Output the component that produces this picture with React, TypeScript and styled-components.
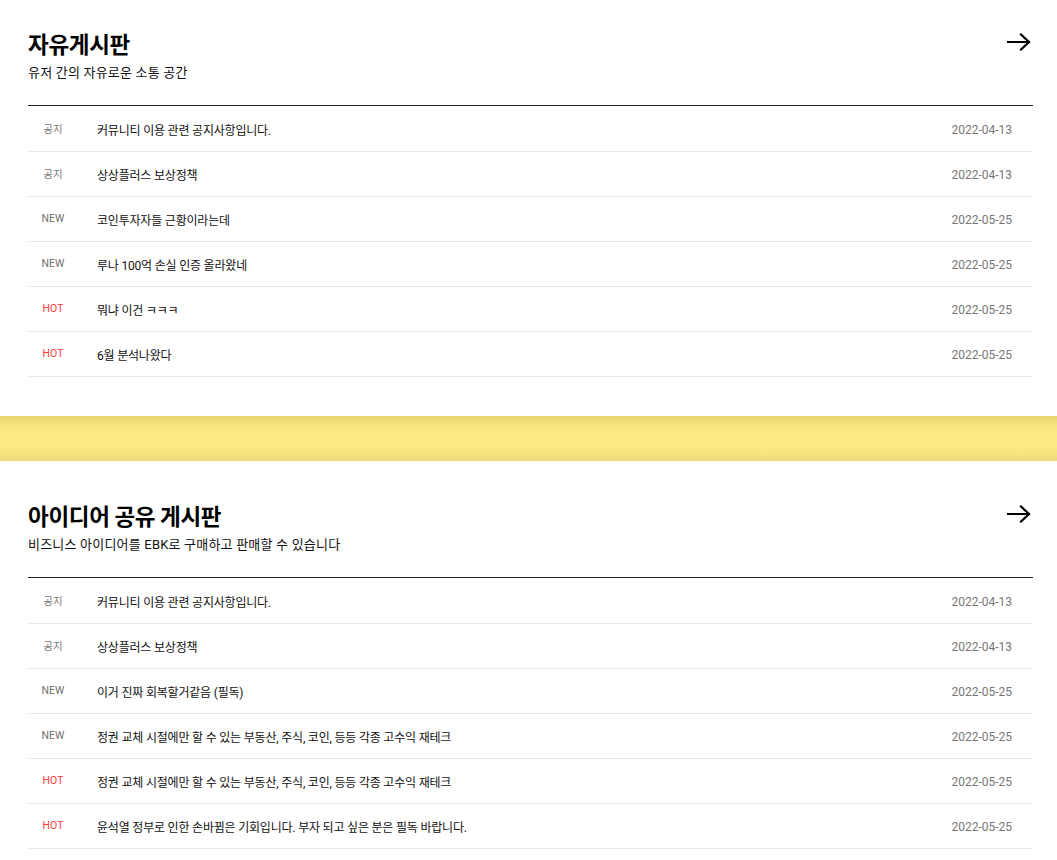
import * as React from "react";
import styled, { createGlobalStyle } from "styled-components";

type Badge = "notice" | "new" | "hot";

interface Post {
  badge: Badge;
  title: string;
  date: string;
}

interface BoardData {
  name: string;
  description: string;
  posts: Post[];
}

const GlobalStyle = createGlobalStyle`
  html, body {
    margin: 0;
    padding: 0;
    background: #fff;
  }
  body {
    font-family: Roboto, "Noto Sans CJK KR", sans-serif;
    color: #111;
  }
`;

const Page = styled.div`
  display: flex;
  flex-direction: column;
`;

const Board = styled.section<{ $top: number }>`
  padding: ${p => p.$top}px 24px 39px 28px;
`;

const Header = styled.header`
  display: flex;
  align-items: flex-start;
  justify-content: space-between;
  padding-bottom: 22px;
  border-bottom: 1px solid #222;
`;

const HeaderText = styled.div`
  display: flex;
  flex-direction: column;
  gap: 5px;
`;

const BoardName = styled.h2`
  margin: 0;
  font-family: "Noto Sans CJK KR", sans-serif;
  font-size: 22.5px;
  line-height: 30px;
  font-weight: 700;
  letter-spacing: -0.3px;
  color: #000;
`;

const BoardDescription = styled.p`
  margin: 0;
  font-family: Roboto, "Noto Sans CJK KR", sans-serif;
  font-size: 13px;
  line-height: 20px;
  letter-spacing: 0.2px;
  color: #111;
`;

const MoreLink = styled.a`
  display: flex;
  margin-top: 5px;
  margin-right: 2px;
  color: #000;
  cursor: pointer;
`;

const PostList = styled.ul`
  margin: 0;
  padding: 0;
  list-style: none;
`;

const PostRow = styled.li`
  display: grid;
  grid-template-columns: 50px 1fr auto;
  column-gap: 19px;
  align-items: center;
  height: 44px;
  padding-right: 21px;
  border-bottom: 1px solid #e8e8e8;

  &:first-child {
    padding-top: 1px;
  }
`;

const badgeColors: Record<Badge, string> = {
  notice: "#777",
  new: "#707070",
  hot: "#ff3a3a"
};

const BadgeCell = styled.span<{ $kind: Badge }>`
  text-align: center;
  font-size: 10.5px;
  color: ${p => badgeColors[p.$kind]};
  margin-top: -1px;
`;

const PostTitle = styled.span`
  font-size: 12px;
  letter-spacing: -0.2px;
  color: #111;
  white-space: nowrap;
  overflow: hidden;
  text-overflow: ellipsis;
  margin-top: 1px;
`;

const PostDate = styled.span`
  font-size: 12px;
  color: #777;
  margin-top: 1px;
`;

const Band = styled.div`
  height: 45px;
  background: linear-gradient(
    to bottom,
    #ebd472 0%,
    #f8e47f 22%,
    #fee985 45%,
    #fde884 70%,
    #f5e27f 85%,
    #ead679 100%
  );
`;

const badgeText: Record<Badge, string> = {
  notice: "공지",
  new: "NEW",
  hot: "HOT"
};

const ArrowIcon = () => (
  <svg width="24" height="18" viewBox="0 0 24 18" fill="none">
    <path
      d="M1 9H22M14 1.5L22 9L14 16.5"
      stroke="#000"
      strokeWidth="2.2"
      strokeLinecap="square"
    />
  </svg>
);

const boards: BoardData[] = [
  {
    name: "자유게시판",
    description: "유저 간의 자유로운 소통 공간",
    posts: [
      { badge: "notice", title: "커뮤니티 이용 관련 공지사항입니다.", date: "2022-04-13" },
      { badge: "notice", title: "상상플러스 보상정책", date: "2022-04-13" },
      { badge: "new", title: "코인투자자들 근황이라는데", date: "2022-05-25" },
      { badge: "new", title: "루나 100억 손실 인증 올라왔네", date: "2022-05-25" },
      { badge: "hot", title: "뭐냐 이건 ㅋㅋㅋ", date: "2022-05-25" },
      { badge: "hot", title: "6월 분석나왔다", date: "2022-05-25" }
    ]
  },
  {
    name: "아이디어 공유 게시판",
    description: "비즈니스 아이디어를 EBK로 구매하고 판매할 수 있습니다",
    posts: [
      { badge: "notice", title: "커뮤니티 이용 관련 공지사항입니다.", date: "2022-04-13" },
      { badge: "notice", title: "상상플러스 보상정책", date: "2022-04-13" },
      { badge: "new", title: "이거 진짜 회복할거같음 (필독)", date: "2022-05-25" },
      {
        badge: "new",
        title: "정권 교체 시절에만 할 수 있는 부동산, 주식, 코인, 등등 각종 고수익 재테크",
        date: "2022-05-25"
      },
      {
        badge: "hot",
        title: "정권 교체 시절에만 할 수 있는 부동산, 주식, 코인, 등등 각종 고수익 재테크",
        date: "2022-05-25"
      },
      {
        badge: "hot",
        title: "윤석열 정부로 인한 손바뀜은 기회입니다. 부자 되고 싶은 분은 필독 바랍니다.",
        date: "2022-05-25"
      }
    ]
  }
];

const BoardSection = ({ board, top }: { board: BoardData; top: number }) => (
  <Board $top={top}>
    <Header>
      <HeaderText>
        <BoardName>{board.name}</BoardName>
        <BoardDescription>{board.description}</BoardDescription>
      </HeaderText>
      <MoreLink>
        <ArrowIcon />
      </MoreLink>
    </Header>
    <PostList>
      {board.posts.map((post, i) => (
        <PostRow key={i}>
          <BadgeCell $kind={post.badge}>{badgeText[post.badge]}</BadgeCell>
          <PostTitle>{post.title}</PostTitle>
          <PostDate>{post.date}</PostDate>
        </PostRow>
      ))}
    </PostList>
  </Board>
);

export default function App() {
  return (
    <Page>
      <GlobalStyle />
      <BoardSection board={boards[0]} top={28} />
      <Band />
      <BoardSection board={boards[1]} top={39} />
    </Page>
  );
}
